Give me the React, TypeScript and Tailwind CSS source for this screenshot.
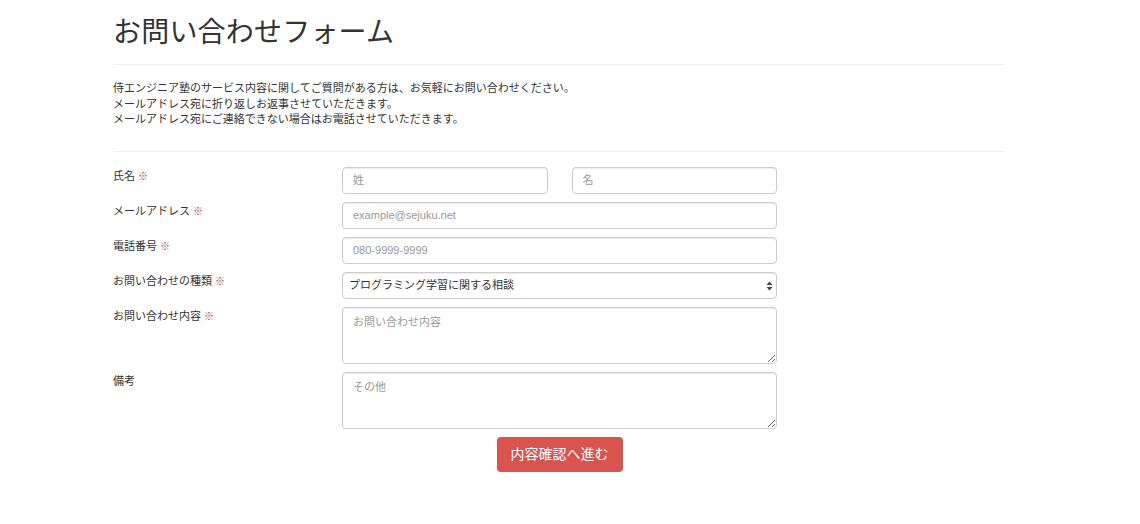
import React from 'react'

const font = { fontFamily: '"Liberation Sans", "Noto Sans CJK JP", sans-serif' }

function Req() {
    return <span className="ml-[3px] text-[10px] font-bold text-[#a94442] align-middle">※</span>
}

function Row({ label, required, children }: { label: string; required?: boolean; children: React.ReactNode }) {
    return (
        <div className="flex">
            <div className="w-[229px] shrink-0 pt-[1px] text-[11px] leading-[16px] text-[#333]">
                {label}
                {required && <Req />}
            </div>
            <div className="w-[435px]">{children}</div>
        </div>
    )
}

const inputCls =
    'block w-full h-[27px] rounded-[4px] border border-[#ccc] bg-white px-[10px] text-[11px] text-[#333] placeholder:text-[#999] outline-none shadow-[inset_0_1px_1px_rgba(0,0,0,0.075)]'

const areaCls =
    'block w-full h-[57px] rounded-[4px] border border-[#ccc] bg-white px-[10px] py-[6px] text-[11px] leading-[16px] text-[#333] placeholder:text-[#999] outline-none shadow-[inset_0_1px_1px_rgba(0,0,0,0.075)]'

export default function App() {
    return (
        <div className="min-h-[524px] bg-white text-[#333]" style={font}>
            <div className="ml-[113px] w-[892px]">
                {/* header */}
                <div className="pt-[13px] pb-[11px] border-b border-[#eee]">
                    <h1 className="text-[28px] leading-[40px] font-normal tracking-[0.2px] text-[#333]">お問い合わせフォーム</h1>
                </div>

                <div className="pt-[16px] pb-[23px] border-b border-[#eee] text-[11px] leading-[15.5px]">
                    <p>侍エンジニア塾のサービス内容に関してご質問がある方は、お気軽にお問い合わせください。</p>
                    <p>メールアドレス宛に折り返しお返事させていただきます。</p>
                    <p>メールアドレス宛にご連絡できない場合はお電話させていただきます。</p>
                </div>

                {/* form */}
                <form className="pt-[15px] flex flex-col gap-[8px]" onSubmit={(e) => e.preventDefault()}>
                    <Row label="氏名" required>
                        <div className="flex gap-[24px]">
                            <input className={inputCls} placeholder="姓" />
                            <input className={inputCls} placeholder="名" />
                        </div>
                    </Row>
                    <Row label="メールアドレス" required>
                        <input className={inputCls} placeholder="example@sejuku.net" />
                    </Row>
                    <Row label="電話番号" required>
                        <input className={inputCls} placeholder="080-9999-9999" />
                    </Row>
                    <Row label="お問い合わせの種類" required>
                        <div className="relative">
                            <select className={inputCls + ' appearance-none pl-[6px] pr-[20px]'} defaultValue="a">
                                <option value="a">プログラミング学習に関する相談</option>
                                <option value="b">その他</option>
                            </select>
                            <svg
                                className="pointer-events-none absolute right-[4px] top-[9px]"
                                width="7"
                                height="10"
                                viewBox="0 0 7 10"
                            >
                                <path d="M3.5 0.5 L6.5 4 L0.5 4 Z" fill="#444" />
                                <path d="M3.5 9.5 L6.5 6 L0.5 6 Z" fill="#444" />
                            </svg>
                        </div>
                    </Row>
                    <Row label="お問い合わせ内容" required>
                        <textarea className={areaCls} placeholder="お問い合わせ内容" />
                    </Row>
                    <Row label="備考">
                        <textarea className={areaCls} placeholder="その他" />
                    </Row>
                    <div className="flex">
                        <div className="w-[229px] shrink-0" />
                        <div className="w-[435px] flex justify-center">
                            <button
                                type="submit"
                                className="h-[35px] px-[14px] rounded-[4px] bg-[#d9534f] text-white text-[14px] leading-[20px]"
                            >
                                内容確認へ進む
                            </button>
                        </div>
                    </div>
                </form>
            </div>
        </div>
    )
}
